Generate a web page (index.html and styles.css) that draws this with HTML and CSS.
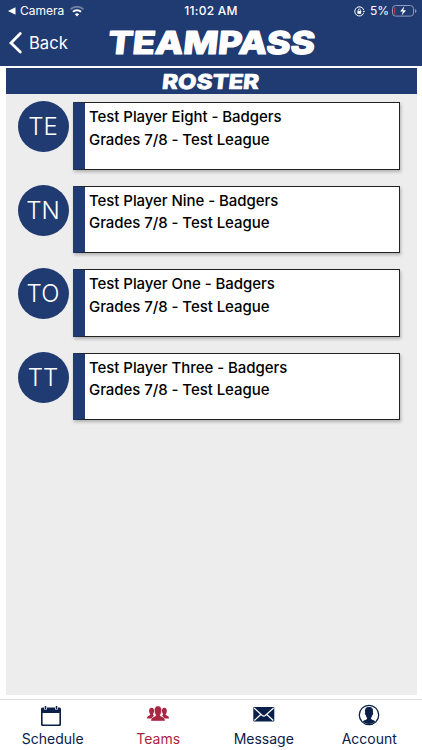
FILE: index.html
```html
<!DOCTYPE html>
<html lang="en">
<head>
<meta charset="utf-8">
<title>Teampass Roster</title>
<link rel="stylesheet" href="styles.css">
</head>
<body>
<header class="header">
  <div class="status">
    <div class="status-left">
      <svg width="8" height="8" viewBox="0 0 8 8"><path d="M0 4 7.500.3v7.400z" fill="#fff"/></svg>
      <span class="camera">Camera</span>
      <svg class="wifi" width="14" height="12" viewBox="0 0 14 12" fill="none" stroke="#fff" stroke-width="2"><path d="M.6 4.300a9.200 9.200 0 0 1 12.800 0" opacity=".35"/><path d="M3 6.800a5.800 5.800 0 0 1 8 0"/><path d="M7 11.400 4.900 9.200a3 3 0 0 1 4.200 0z" fill="#fff" stroke="none"/></svg>
    </div>
    <div class="clock">11:02 AM</div>
    <div class="status-right">
      <svg width="11" height="11" viewBox="0 0 11 11" fill="none" stroke="#fff"><path d="M9.600 7.200A4.600 4.600 0 1 1 9.800 4.200"/><path d="m8.500 5 1.300 1.500L11 5z" fill="#fff" stroke="none"/><path d="M3.400 5h3.800v2.800H3.400z" fill="#fff" stroke="none"/><path d="M4.200 5V4a1.100 1.100 0 0 1 2.200 0v1" stroke-width=".8"/></svg>
      <span class="percent">5%</span>
      <svg width="25" height="12" viewBox="0 0 25 12"><rect x=".5" y=".5" width="21" height="10.600" rx="3" fill="none" stroke="#8f9bbb"/><path d="M2 3.200Q2 2 3.400 2v7.600Q2 9.600 2 8.400z" fill="#a63a58"/><path d="M23 4v4q1.500-.6 1.500-2T23 4z" fill="#8f9bbb"/><path d="m12.400 1.300-4.300 5.200h2.800l-1.300 4 4.500-5.300h-2.900z" fill="#fff"/></svg>
    </div>
  </div>
  <div class="nav">
    <div class="back">
      <svg width="14" height="22" viewBox="0 0 14 22"><path d="M11.300 1.500 2 11l9.300 9" fill="none" stroke="#fff" stroke-width="2.800" stroke-linecap="round"/></svg>
      <span>Back</span>
    </div>
    <svg class="logo" width="230" height="43" viewBox="-10 -5 230 43"><text class="brand" transform="translate(0 26.500) skewX(-6)" x="0" y="0" textLength="207" lengthAdjust="spacingAndGlyphs">TEAMPASS</text></svg>
  </div>
</header>
<main class="page">
  <div class="title">
    <svg width="104" height="26" viewBox="0 0 104 26"><text class="heading" transform="translate(0 20) skewX(-6)" x="2.500" y="0" textLength="97" lengthAdjust="spacingAndGlyphs">ROSTER</text></svg>
  </div>
  <div class="list">
    <div class="row"><div class="avatar">TE</div><div class="card"><p>Test Player Eight - Badgers</p><p>Grades 7/8 - Test League</p></div></div>
    <div class="row"><div class="avatar">TN</div><div class="card"><p>Test Player Nine - Badgers</p><p>Grades 7/8 - Test League</p></div></div>
    <div class="row"><div class="avatar">TO</div><div class="card"><p>Test Player One - Badgers</p><p>Grades 7/8 - Test League</p></div></div>
    <div class="row"><div class="avatar">TT</div><div class="card"><p>Test Player Three - Badgers</p><p>Grades 7/8 - Test League</p></div></div>
  </div>
</main>
<nav class="tabs">
  <div class="tab">
    <svg class="calendar" width="22" height="22" viewBox="0 0 22 22"><path d="M2.500 2.500h17q1.500 0 1.500 1.500v15.500q0 1.500-1.500 1.500h-17Q1 21 1 19.500V4q0-1.500 1.500-1.500zM2.600 8v10.700q0 .8.8.8h15.200q.8 0 .8-.8V8z" fill="#0a2048" fill-rule="evenodd"/><path d="M5.500 1v3.500M16.500 1v3.500" stroke="#fff" stroke-width="3"/><path d="M5.500 1v3M16.500 1v3" stroke="#0a2048" stroke-width="1.500"/></svg>
    <span>Schedule</span>
  </div>
  <div class="tab active">
    <svg class="people" width="22" height="22" viewBox="0 0 22 22" fill="#aa2744"><path d="M0 14.500c0-2.300 1.300-2.600 2.800-3.200.8-.4.500-1.200 0-1.900C1.900 7.800 1.500 3.700 4.500 3.700c2.300 0 2.900 1.800 2.500 3.700-.2 1.700-1.500 2.600-.8 3.700l.8.500-2.500 2.900zM22 14.500c0-2.300-1.300-2.600-2.800-3.200-.8-.4-.5-1.200 0-1.900.9-1.600 1.300-5.700-1.700-5.700-2.300 0-2.900 1.800-2.500 3.700.2 1.700 1.500 2.600.8 3.700l-.8.500 2.500 2.900z"/><path d="M3.900 17c0-3.500 1.800-3.900 4.200-4.800 1-.4.700-1.300.2-2.100C7.500 8.800 6.100 2 11 2s3.500 6.800 2.700 8.100c-.5.800-.8 1.700.2 2.100 2.400.9 4.200 1.300 4.200 4.800z" stroke="#fff" stroke-width=".4"/></svg>
    <span>Teams</span>
  </div>
  <div class="tab">
    <svg width="22" height="22" viewBox="0 0 22 22"><rect x=".3" y="3" width="21" height="14.500" rx=".8" fill="#0a2048"/><path d="m1 4 8.300 7.500q1.500 1.200 3 0L20.600 4M1.300 16.500 7.800 10.500M20.300 16.500 13.800 10.500" fill="none" stroke="#fff" stroke-width="1.200"/></svg>
    <span>Message</span>
  </div>
  <div class="tab">
    <svg class="account" width="22" height="22" viewBox="0 0 22 22"><circle cx="11" cy="11" r="9.700" fill="#fff" stroke="#0a2048" stroke-width="1.300"/><path d="M4.800 17.500c.6-1 2.200-1.600 3.600-2.100.7-.3.800-1 .4-1.900-.6-.8-.9-1.500-1.100-2.500-1-.4-1-2-.5-2.400C6.500 4.400 8 2.900 11 2.900s4.500 1.500 3.900 5.700c.5.400.5 2-.5 2.400-.2 1-.5 1.700-1.100 2.500-.4.900-.3 1.600.4 1.900 1.400.5 3 1.100 3.600 2.100A8.900 8.900 0 0 1 4.800 17.500z" fill="#0a2048"/></svg>
    <span>Account</span>
  </div>
</nav>
</body>
</html>
```
FILE: styles.css
```css
* { box-sizing: border-box; }
body {
  margin: 0;
  width: 422px;
  height: 750px;
  display: flex;
  flex-direction: column;
  background: #fff;
  font-family: Inter, "Liberation Sans", sans-serif;
  overflow: hidden;
}
svg { display: block; flex: none; overflow: visible; }
.header { height: 65.500px; flex: none; background: #203a72; color: #fff; }
.status {
  height: 22px;
  display: grid;
  grid-template-columns: 1fr auto 1fr;
  align-items: center;
  font-size: 12px;
  line-height: 22px;
}
.status-left { display: flex; align-items: center; padding-left: 8px; }
.camera { margin-left: 4px; width: 44px; font-size: 12px; white-space: nowrap; }
.wifi { margin-left: 6px; }
.clock { font-weight: 500; font-size: 12px; letter-spacing: .25px; }
.status-right { display: flex; align-items: center; justify-content: flex-end; padding-right: 5px; }
.percent { margin: 0 3px 0 5px; font-size: 12px; }
.nav { display: flex; height: 43px; }
.back { display: flex; align-items: center; width: 97px; padding-left: 9px; font-size: 16.600px; height: 42px; }
.back span { margin-left: 6px; }
.brand, .heading {
  font-family: Inter, sans-serif;
  font-weight: 800;
  fill: #fff;
  stroke: #fff;
  stroke-linejoin: round;
}
.brand { font-size: 31.500px; stroke-width: 1.200px; }
.heading { font-size: 20.500px; stroke-width: .7px; }
.page { flex: 1; margin: 2px 5.500px 4px; background: #ededed; }
.title { height: 26.500px; background: #203a72; display: flex; justify-content: center; padding-top: 1px; }
.list { display: flex; flex-direction: column; gap: 16px; padding: 8px 17px 0 12px; }
.row { display: flex; gap: 4px; height: 67.500px; }
.avatar {
  width: 51px;
  height: 51px;
  margin-top: -1px;
  border-radius: 50%;
  background: #203a72;
  color: #fff;
  font-size: 24px;
  font-weight: 300;
  line-height: 51px;
  text-align: center;
  flex: none;
}
.card {
  flex: 1;
  background: #fff;
  border: 1px solid #222;
  border-left: 12px solid #203a72;
  box-shadow: 1px 2px 3px rgba(0, 0, 0, .25);
  padding: 3px 0 0 4.500px;
  color: #000;
}
.card p { margin: 0; font-size: 15px; font-weight: 450; letter-spacing: -.06px; line-height: 22.500px; white-space: nowrap; }
.tabs { height: 51px; flex: none; border-top: 1px solid #dedede; display: flex; }
.tab { flex: 1; display: flex; flex-direction: column; align-items: center; padding-top: 4px; color: #0a2048; font-size: 14px; }
.tab svg { height: 22px; }
.tab .calendar { margin: 1px 4px -1px 0; }
.tab .account { margin: -.5px 0 .5px; }
.tab span { line-height: 18px; margin-top: 4px; }
.active { color: #aa2744; }
```
